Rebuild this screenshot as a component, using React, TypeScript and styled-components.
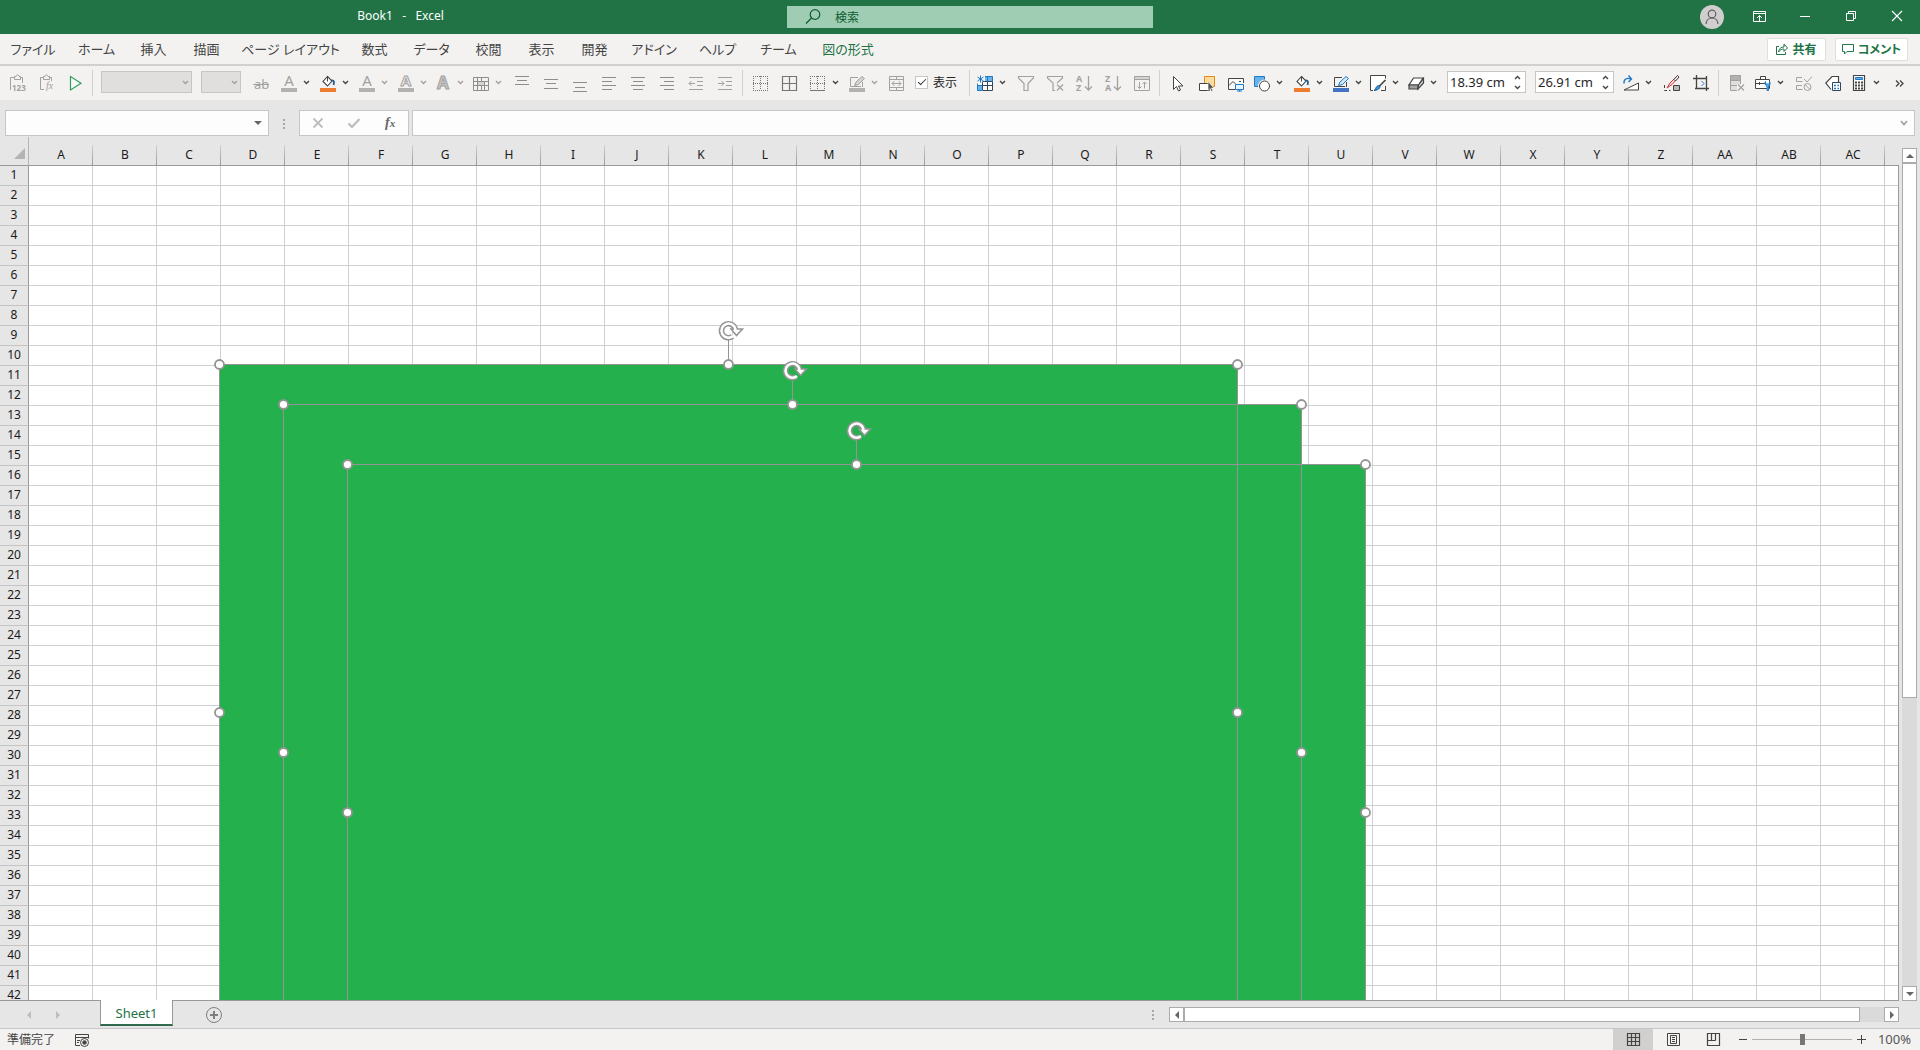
import React, { ReactNode } from "react";
import styled, { createGlobalStyle, css } from "styled-components";

const GlobalStyle = createGlobalStyle`
  *, *::before, *::after { box-sizing: border-box; }
  html, body { margin: 0; padding: 0; height: 100%; }
  body, button, input, select {
    font-family: "Noto Sans", "Noto Sans CJK JP", sans-serif;
    font-size: 12px;
    color: #262626;
  }
  button {
    display: flex;
    align-items: center;
    justify-content: center;
    margin: 0;
    padding: 0;
    border: 0;
    background: none;
    flex: none;
  }
  svg { display: block; flex: none; overflow: visible; }
`;

const GRAY = "#a3a19f";
const DARK = "#444444";
const BLUE = "#1e78c8";
const GREEN = "#217346";

/* ---------- window frame ---------- */

const Window = styled.div`
  display: flex;
  flex-direction: column;
  height: 100vh;
  overflow: hidden;
  background: #e6e6e6;
`;

const TitleBar = styled.header`
  display: grid;
  grid-template-columns: minmax(0, 1fr) 366px minmax(0, 1fr);
  align-items: center;
  flex: none;
  height: 34px;
  padding-left: 20px;
  background: ${GREEN};
`;

const Title = styled.h1`
  margin: 0;
  padding: 0 6px 2px 0;
  font-size: 12px;
  font-weight: 400;
  line-height: 30px;
  color: #ffffff;
  text-align: center;
  white-space: pre;
`;

const Search = styled.label`
  display: flex;
  align-items: center;
  gap: 14px;
  height: 22px;
  padding-left: 18px;
  background: #9fcdb3;
`;

const SearchInput = styled.input`
  flex: 1;
  min-width: 0;
  padding: 0;
  border: 0;
  outline: 0;
  background: transparent;
  color: #0e5c2f;
  &::placeholder { color: #0e5c2f; opacity: 1; }
`;

const WindowControls = styled.div`
  display: flex;
  align-items: center;
  justify-content: flex-end;
`;

const Avatar = styled.button`
  width: 24px;
  height: 24px;
  margin-right: 12px;
  border-radius: 50%;
  background: #d0cece;
`;

const WindowButton = styled.button`
  width: 46px;
  height: 32px;
  padding-bottom: 2px;
  color: #ffffff;
`;

/* ---------- ribbon tabs ---------- */

const TabRow = styled.div`
  display: flex;
  align-items: center;
  justify-content: space-between;
  flex: none;
  height: 30px;
  padding-right: 12px;
  background: #f3f2f1;
`;

const Tabs = styled.nav`
  display: flex;
`;

const RibbonTab = styled.button<{ $width: number; $active?: boolean }>`
  width: ${(p) => p.$width}px;
  height: 30px;
  padding-bottom: 2px;
  font-size: 13px;
  font-feature-settings: "palt";
  white-space: nowrap;
  color: ${(p) => (p.$active ? GREEN : "#444444")};
`;

const RibbonActions = styled.div`
  display: flex;
  gap: 9px;
`;

const ActionButton = styled.button<{ $width: number }>`
  width: ${(p) => p.$width}px;
  height: 23px;
  gap: 4px;
  border: 1px solid #e1dfdd;
  border-radius: 2px;
  background: #ffffff;
  color: ${GREEN};
  font-weight: 700;
  font-feature-settings: "palt";
  white-space: nowrap;
`;

/* ---------- toolbar ---------- */

const Toolbar = styled.div`
  display: flex;
  align-items: center;
  flex: none;
  height: 36px;
  padding-left: 3px;
  border-top: 2px solid #d2d0ce;
  background: #f3f2f1;
  overflow: hidden;
`;

const ToolButton = styled.button`
  width: 29px;
  height: 28px;
`;

const SplitButton = styled.button<{ $narrow?: boolean }>`
  justify-content: flex-start;
  gap: 5px;
  width: ${(p) => (p.$narrow ? 38 : 39)}px;
  height: 28px;
  padding-left: ${(p) => (p.$narrow ? 4 : 6)}px;
`;

const Raised = styled.span`
  display: flex;
  flex: none;
  margin-bottom: 2px;
`;

const Separator = styled.span<{ $before?: number; $after?: number }>`
  flex: none;
  width: 1px;
  height: 26px;
  margin: 0 ${(p) => p.$after ?? 3}px 0 ${(p) => p.$before ?? 3}px;
  background: #d2d0ce;
`;

const ComboGroup = styled.span`
  display: flex;
  flex: none;
  gap: 9px;
  margin: 0 5px 2px 0;
`;

const ComboWrap = styled.span<{ $width: number }>`
  display: grid;
  width: ${(p) => p.$width}px;
  height: 22px;
  > * { grid-area: 1 / 1; }
  > svg { align-self: center; justify-self: end; margin-right: 2px; }
`;

const Combo = styled.select`
  appearance: none;
  width: 100%;
  height: 100%;
  border: 1px solid #c8c6c4;
  border-radius: 0;
  background: #e1dfdd;
  opacity: 1;
`;

const ShowLabel = styled.label`
  display: flex;
  align-items: center;
  gap: 5px;
  flex: none;
  width: 54px;
  margin: 0 0 2px 4px;
  white-space: nowrap;
`;

const CheckBox = styled.input`
  appearance: none;
  flex: none;
  width: 13px;
  height: 13px;
  margin: 0;
  border: 1px solid #c8c6c4;
  background: #ffffff;
  &:checked::before {
    content: "";
    display: block;
    width: 8px;
    height: 4px;
    margin: 2px 0 0 2px;
    border: solid #333333;
    border-width: 0 0 1px 1px;
    transform: rotate(-45deg);
  }
`;

const SpinGroup = styled.span`
  display: flex;
  flex: none;
  gap: 9px;
  margin: 0 5px 2px 5px;
`;

const SpinBox = styled.span`
  display: flex;
  width: 79px;
  height: 22px;
  border: 1px solid #c8c6c4;
  background: #ffffff;
`;

const SpinInput = styled.input`
  flex: 1;
  min-width: 0;
  padding: 0 0 0 2px;
  border: 0;
  outline: 0;
  background: transparent;
  font-size: 13px;
`;

const SpinButtons = styled.span`
  display: flex;
  flex-direction: column;
  width: 16px;
`;

const SpinButton = styled.button`
  width: 16px;
  height: 10px;
`;

/* ---------- formula bar ---------- */

const FormulaRow = styled.div`
  display: flex;
  flex: none;
  height: 37px;
  padding: 10px 5px 0 5px;
`;

const boxed = css`
  display: flex;
  align-items: center;
  height: 26px;
  border: 1px solid #c6c6c6;
  background: #fdfdfd;
`;

const NameBox = styled.div`
  ${boxed}
  width: 264px;
`;

const BareInput = styled.input`
  flex: 1;
  min-width: 0;
  height: 100%;
  border: 0;
  outline: 0;
  background: transparent;
`;

const DropButton = styled.button`
  width: 20px;
  height: 24px;
`;

const DotGrip = styled.span<{ $width: number }>`
  display: flex;
  align-items: center;
  justify-content: center;
  flex: none;
  width: ${(p) => p.$width}px;
`;

const FormulaActions = styled.div`
  ${boxed}
  width: 110px;
  margin-right: 3px;
`;

const FormulaAction = styled.button`
  width: 36px;
  height: 24px;
`;

const FormulaBox = styled.div`
  ${boxed}
  flex: 1;
  min-width: 0;
`;

/* ---------- sheet ---------- */

const Workspace = styled.main`
  display: flex;
  flex: 1;
  min-height: 0;
`;

const SheetView = styled.section`
  position: relative;
  flex: 1;
  min-width: 0;
  overflow: hidden;
  border-bottom: 1px solid #999999;
`;

const Cells = styled.table`
  table-layout: fixed;
  width: max-content;
  border-collapse: separate;
  border-spacing: 0;
`;

const HeadCol = styled.col`
  width: 29px;
`;

const CellCol = styled.col`
  width: 64px;
`;

const Corner = styled.td`
  height: 29px;
  padding: 5px 3px 0 0;
  border-right: 1px solid #b4b4b4;
  border-bottom: 1px solid #999999;
  background: #e6e6e6;
  > svg { margin-left: auto; }
`;

const ColumnHead = styled.th`
  height: 29px;
  padding: 8px 0 0;
  border-bottom: 1px solid #999999;
  background: linear-gradient(#d0d0d0, #999999) right bottom / 1px 20px no-repeat #e6e6e6;
  font-weight: 400;
  line-height: 20px;
  color: #1a1a1a;
`;

const RowHead = styled.th`
  height: 20px;
  padding: 0;
  border-right: 1px solid #999999;
  border-bottom: 1px solid #c4c4c4;
  background: #e6e6e6;
  font-weight: 400;
  line-height: 17px;
  vertical-align: top;
  color: #1a1a1a;
`;

const Cell = styled.td`
  height: 20px;
  padding: 0;
  border-right: 1px solid #d0d0d0;
  border-bottom: 1px solid #d0d0d0;
  background: #ffffff;
`;

const SheetEdge = styled.div`
  flex: none;
  width: 1px;
  margin-top: 28px;
  background: #999999;
`;

/* Pictures float freely over the cells. */
const Picture = styled.div<{ $x: number; $y: number }>`
  position: absolute;
  left: ${(p) => p.$x}px;
  top: ${(p) => p.$y}px;
  width: 1019px;
  height: 697px;
  background: #24b14d;
`;

const Selection = styled.svg<{ $x: number; $y: number }>`
  position: absolute;
  left: ${(p) => p.$x}px;
  top: ${(p) => p.$y}px;
`;

const VerticalScroll = styled.div`
  display: flex;
  flex-direction: column;
  flex: none;
  width: 15px;
  margin: 11px 3px 0;
  background: #dadada;
`;

const ScrollButton = styled.button`
  width: 15px;
  height: 15px;
  border: 1px solid #ababab;
  background: #ffffff;
`;

const VerticalTrack = styled.div`
  flex: 1;
  min-height: 0;
`;

const VerticalThumb = styled.div`
  height: 65%;
  border: 1px solid #ababab;
  background: #ffffff;
`;

/* ---------- sheet tabs ---------- */

const SheetBar = styled.div`
  display: flex;
  align-items: center;
  justify-content: space-between;
  flex: none;
  height: 28px;
  padding-right: 21px;
  border-bottom: 1px solid #c6c6c6;
`;

const SheetTabs = styled.div`
  display: flex;
  align-items: center;
  height: 100%;
  padding-left: 14px;
`;

const SheetNav = styled.button`
  width: 29px;
  height: 24px;
`;

const SheetTab = styled.button`
  position: relative;
  align-self: flex-start;
  width: 73px;
  height: 26px;
  margin: -1px 29px 0 28px;
  padding-top: 2px;
  border: solid #999999;
  border-width: 0 1px;
  border-bottom: 2px solid #31694f;
  background: #ffffff;
  color: ${GREEN};
  font-size: 13px;
  line-height: 18px;
`;

const AddSheet = styled.button`
  width: 24px;
  height: 24px;
`;

const ScrollGroup = styled.div`
  display: flex;
  flex: none;
`;

const HorizontalScroll = styled.div`
  display: flex;
  width: 730px;
  height: 15px;
  background: #dadada;
`;

const HorizontalTrack = styled.div`
  flex: 1;
  min-width: 0;
  padding-right: 24px;
`;

const HorizontalThumb = styled.div`
  height: 15px;
  border: 1px solid #ababab;
  background: #ffffff;
`;

/* ---------- status bar ---------- */

const StatusBar = styled.footer`
  display: flex;
  align-items: center;
  justify-content: space-between;
  flex: none;
  height: 21px;
  padding: 0 9px 0 7px;
  background: #f3f2f1;
  color: #444444;
`;

const StatusGroup = styled.div`
  display: flex;
  align-items: center;
  height: 100%;
`;

const StatusText = styled.span`
  width: 60px;
  line-height: 20px;
  white-space: nowrap;
`;

const MacroButton = styled.button`
  width: 30px;
  height: 21px;
`;

const ViewButton = styled.button<{ $active?: boolean }>`
  width: 40px;
  height: 21px;
  background: ${(p) => (p.$active ? "#d2d0ce" : "transparent")};
`;

const ZoomButton = styled.button`
  width: 19px;
  height: 21px;
`;

const ZoomSlider = styled.input`
  appearance: none;
  width: 100px;
  height: 21px;
  margin: 0;
  background: transparent;
  &::-webkit-slider-runnable-track {
    height: 1px;
    background: #b0b0b0;
  }
  &::-webkit-slider-thumb {
    appearance: none;
    width: 5px;
    height: 11px;
    margin-top: -5px;
    border-radius: 0;
    background: #777777;
  }
`;

const ZoomValue = styled.button`
  width: 40px;
  height: 21px;
  padding-bottom: 2px;
  justify-content: flex-end;
  font-size: 13px;
  color: #555555;
`;

/* ---------- icons ---------- */

const Icon = ({ children, color = DARK, size = 16 }: { children: ReactNode; color?: string; size?: number }) => (
  <svg width={size} height={size} viewBox={`0 0 ${size} ${size}`} fill="none" stroke={color} aria-hidden="true">
    {children}
  </svg>
);

const Chevron = ({ color = DARK, up = false }: { color?: string; up?: boolean }) => (
  <svg width="9" height="5" viewBox="0 0 9 5" fill="none" stroke={color} strokeWidth="1.4" aria-hidden="true">
    <path d={up ? "M2 4 4.500 1.500 7 4" : "M2 1 4.500 3.500 7 1"} />
  </svg>
);

const Triangle = ({ d, color = "#666666" }: { d: string; color?: string }) => (
  <svg width="8" height="8" viewBox="0 0 8 8" fill={color} aria-hidden="true">
    <path d={d} />
  </svg>
);

const PasteValues = () => (
  <Icon color={GRAY}>
    <path d="M.5 15V2.500h4M10.500 2.500h2V8M4.500 4.500v-3H6a1.500 1.500 0 0 1 3 0h1.500v3z" />
    <text x="2" y="16" fontSize="8" fontWeight="700" fill={GRAY} stroke="none">123</text>
  </Icon>
);
const PasteFormula = () => (
  <Icon color={GRAY}>
    <path d="M5 14.500H1.500v-12h3M10.500 2.500h2V6M4.500 4.500v-3H6a1.500 1.500 0 0 1 3 0h1.500v3z" />
    <text x="7" y="14" fontSize="10" fontStyle="italic" fontFamily="Liberation Serif, serif" fill={GRAY} stroke="none">fx</text>
  </Icon>
);
const Play = () => (
  <Icon color="#2f9e5b">
    <path d="M2.500 1.500V15L13 8.200z" strokeWidth="1.2" fill="#fafafa" />
  </Icon>
);
const Strike = () => (
  <Icon color={GRAY}>
    <text x="1" y="14" fontSize="13" fill={GRAY} stroke="none">ab</text>
    <path d="M0 9.500h16" />
  </Icon>
);
const Letter = ({ outline, bar = true }: { outline?: boolean; bar?: boolean }) => (
  <Icon color={GRAY}>
    {outline ? (
      <text x="8" y={bar ? 11 : 14} textAnchor="middle" fontSize={bar ? 15 : 17} fontWeight="700" fill={bar ? "#f3f2f1" : "#c8c6c4"} stroke={GRAY}>A</text>
    ) : (
      <text x="8" y="11" textAnchor="middle" fontSize="15" fill={GRAY} stroke="none">A</text>
    )}
    {bar && <rect y="13" width="16" height="4" fill="#b3b1af" stroke="none" />}
  </Icon>
);
const Bucket = () => (
  <Icon>
    <path d="M7.500 1.500 12 6 7.500 11 3 6.500z" fill="#ffffff" strokeWidth="1.1" />
    <path d="M11.500 5.500c2.500-.5 3 1.500 2 4.500" stroke="#1c5f94" strokeWidth="1.800" />
    <path d="M7.500 6.500V1" />
    <rect y="13" width="16" height="4" fill="#ed7d31" stroke="none" />
  </Icon>
);
const MergedGrid = () => (
  <Icon color="#8f8d8b">
    <path d="M5 6.500h6v4H5z" fill="#d6d4d2" stroke="none" />
    <path d="M.5 2.500h15v13H.5zM.5 6.500h15M.5 10.500h15M4.500 2.500v13M11.500 6.500v9M8.500 2.500v4M8.500 10.500v5" />
  </Icon>
);
const Lines = ({ rows }: { rows: [number, number, number][] }) => (
  <Icon color="#8f8d8b">
    {rows.map(([y, x1, x2]) => (
      <path key={y} d={`M${x1} ${y}.5H${x2}`} />
    ))}
  </Icon>
);
const Indent = ({ right }: { right?: boolean }) => (
  <Icon color={GRAY}>
    <path d="M1 2.500h14M9 6.500h6M9 10.500h6M1 14.500h14" />
    <path d={right ? "M1 8.500h6M4.500 6 7 8.500 4.500 11" : "M7 8.500H1M3.500 6 1 8.500 3.500 11"} />
  </Icon>
);
const GridIcon = ({ mode }: { mode: "none" | "all" | "bottom" }) => (
  <Icon color="#777573">
    {mode === "all" ? (
      <path d="M.5 1.500h14v14H.5zM.5 8.500h14M7.500 1.500v14" strokeWidth="1.200" />
    ) : (
      <>
        <path strokeDasharray="1 1" d="M0 1.500h15M.5 1v14M14.500 1v14M0 8.500h15M7.500 1v14" />
        <path strokeDasharray={mode === "none" ? "1 1" : undefined} d="M0 15.500h15" />
      </>
    )}
  </Icon>
);
const PenBar = ({ on }: { on?: boolean }) => (
  <Icon color={on ? DARK : GRAY}>
    <path d="M9 2.500H1.500v9H12M13.500 7v5" />
    <path d="M5.500 10.500 7 7 13 1.500 15.500 3.500 9.500 9.500z" stroke={on ? BLUE : GRAY} fill={on ? "#d4e8f8" : "#d6d4d2"} />
    <rect y="13" width="16" height="4" fill={on ? "#4472c4" : "#b3b1af"} stroke="none" />
  </Icon>
);
const MergeCells = () => (
  <Icon color={GRAY}>
    <path d="M.5 1.500h14v14H.5zM.5 4.500h14M.5 12.500h14M7.500 1.500v3M7.500 12.500v3M3 8.500h9M5.500 6 3 8.500 5.500 11M9.500 6 12 8.500 9.500 11" />
  </Icon>
);
const TableStar = () => (
  <Icon>
    <path d="M5 5h11v11H0V8h5z" fill="#ffffff" stroke="none" />
    <path d="M8 1.500h8v5H8zM0 11h5v5H0z" fill="#69b3ec" stroke="none" />
    <path d="M15.500 6.500v9H6M6 6.500h9.500M6 10.500h9.500M5.500 6.500v9M10.500 6.500v9" stroke="#33475a" />
    <path d="M8 1.500h7.500v5M10.500 1.500v5M.5 8.500v7H5.500M.5 10.500h5" stroke={BLUE} />
    <path d="M3.500.5v7M.5 2l6 4M6.500 2l-6 4" stroke={BLUE} />
  </Icon>
);
const Funnel = ({ cleared }: { cleared?: boolean }) => (
  <Icon color={GRAY}>
    {cleared ? (
      <>
        <path d="M8 15.500H6V8L.5 3V1.500h15V3L10 8" strokeWidth="1.200" />
        <path d="M10 9.500l6 6M16 9.500l-6 6" strokeWidth="1.300" />
      </>
    ) : (
      <path d="M.5 1.500h15V3L10 8.500v7H6v-7L.5 3z" strokeWidth="1.200" />
    )}
  </Icon>
);
const Sort = ({ top, bottom }: { top: string; bottom: string }) => (
  <Icon color={GRAY}>
    <text x="0" y="7" fontSize="9" fontWeight="700" fill={GRAY} stroke="none">
      {top}
      <tspan x="0" dy="9">{bottom}</tspan>
    </text>
    <path d="M12.500 1v14M9 11.500l3.500 3.500L16 11.500" strokeWidth="1.300" />
  </Icon>
);
const SortPanel = () => (
  <Icon color={GRAY}>
    <path d="M.5 1.500h15v14H.5z" />
    <path d="M.5 1.500h15v3H.5z" fill="#d6d4d2" />
    <path d="M5.500 7v6.500M3.500 11.500l2 2 2-2M10.500 13.500V7M8.500 9l2-2 2 2" />
  </Icon>
);
const Pointer = () => (
  <Icon>
    <path d="M3.500 1.500v13l3-3 2 4.500 2-1-2-4H13z" fill="#ffffff" />
  </Icon>
);
const SelectObjects = () => (
  <Icon>
    <path d="M5.500 1.500h10v10h-10z" fill="#fbdc9b" stroke="#e08a1e" />
    <path d="M.5 8.500h10v7H.5z" fill="#ffffff" />
    <path d="M9 6.500v9l2-2 1.500 3 1.500-.7L12.500 13H15z" fill="#555555" stroke="#ffffff" strokeWidth=".6" />
  </Icon>
);
const PictureIcon = () => (
  <Icon>
    <path d="M7 14.500H.5v-11h15V8" fill="#fbfbfb" />
    <path d="M1 10.500l4-4 3 3M11 6.500h2" />
    <path d="M7.500 9.500h8v5h-8zM11.500 14.500v2M9 16h5" stroke={BLUE} fill="#eaf5fd" />
  </Icon>
);
const ShapesIcon = () => (
  <Icon>
    <path d="M.5 1.500h10v10H.5z" fill="#69b3ec" stroke={BLUE} />
    <circle cx="10.500" cy="11" r="5.500" fill="#ffffff" stroke="#f3f2f1" strokeWidth="2" />
    <circle cx="10.500" cy="11" r="5" fill="#ffffff" />
  </Icon>
);
const BrushSquare = () => (
  <Icon>
    <path d="M3 15.500H.5V.5h15v3M15.500 11v4.500H11" fill="#ffffff" />
    <path d="M15.500 5 9 11.500" strokeWidth="1.600" />
    <path d="M9.500 10.500c1 1 .5 4.500-5.500 5 2-1 1.500-5 5.500-5z" fill="#3b8fd6" stroke="#1c5f94" />
  </Icon>
);
const Eraser = () => (
  <Icon>
    <path d="M5.500 3h9.500L10.500 10H1z" fill="#ffffff" strokeWidth="1.200" />
    <path d="M1 10v4h9v-4z" fill="#a19f9d" strokeWidth="1.200" />
    <path d="M10.500 10 15.500 3.500V8L10 14z" fill="#d6d4d2" strokeWidth="1.200" />
  </Icon>
);
const RotateShape = () => (
  <Icon>
    <path d="M1 8.500C.5 4 4 2.500 8 4M5.500 .5l3 3.500-3 3" stroke={BLUE} strokeWidth="1.400" />
    <path d="M15.500 8v7H1z" fill="#ffffff" />
  </Icon>
);
const RedBrush = () => (
  <Icon>
    <path d="M9.500 10.500h6v5h-6z" fill="#b9b7b5" />
    <path d="M.5 10v5.500h6" strokeDasharray="3 2" />
    <path d="M3 13 6 8 13.500.5 15 2 8 9.500z" stroke="#d13438" fill="#fbd9da" />
    <path d="M10 4.500 13.500.5 15 2 11.500 6z" fill="#ffffff" />
  </Icon>
);
const Crop = () => (
  <Icon>
    <path d="M3.500 0v13.500M0 3.500h13.500M13.500 1v15M2 13.500h14" strokeWidth="1.300" />
    <path d="M8.500 6 11 8.500 8.500 11" stroke={BLUE} />
  </Icon>
);
const DeleteRows = () => (
  <Icon color={GRAY}>
    <path d="M1.500.5h10v15h-10zM1.500 5.500h10M1.500 10.500h10" fill="#e1dfdd" />
    <path d="M1.500.5h10v5h-10z" fill="#b3b1af" />
    <rect x="8" y="9" width="8" height="7" fill="#f3f2f1" stroke="none" />
    <path d="M9 9.500l6 6M15 9.500l-6 6" strokeWidth="1.200" />
  </Icon>
);
const Briefcase = () => (
  <Icon>
    <path d="M.5 4.500h14v9H.5zM5.500 4.500V1.500h5v3M.5 8.500h10M4.500 7v3" fill="#ffffff" />
    <path d="M12 15.500V11a3 3 0 0 1-1.500-4.500v2.500h4V6.500A3 3 0 0 1 13.500 11v4.500z" stroke={BLUE} fill="#69b3ec" />
  </Icon>
);
const RuleCheck = () => (
  <Icon color={GRAY}>
    <path d="M6 2.500H.5v4h6M6 10.500H.5v4h6M8 4l3 3 5-5.500" />
    <circle cx="11.500" cy="12" r="3.500" />
    <path d="M9 9.500l5 5" />
  </Icon>
);
const TagList = () => (
  <Icon>
    <path d="M6 14.500.8 8 7 1.500h6.500V7" strokeWidth="1.200" fill="#ffffff" />
    <path d="M7.500 7.500h8v8h-8z" fill="#ffffff" stroke="#33475a" />
    <path d="M9 10.500h2M9 13.500h2M12.500 10.500H14M12.500 13.500H14" stroke={BLUE} strokeWidth="1.600" />
  </Icon>
);
const Calculator = () => (
  <Icon>
    <path d="M2.500.5h11v15h-11z" fill="#ffffff" strokeWidth="1.200" />
    <path d="M4.500 2.500h7v2h-7z" stroke={BLUE} fill="#69b3ec" />
    <path d="M4 7.500h8M4 10.500h8M4 13.500h8" strokeDasharray="2 1" strokeWidth="2" />
  </Icon>
);

const Dots = ({ color = "#a6a6a6" }: { color?: string }) => (
  <svg width="2" height="10" viewBox="0 0 2 10" fill={color} aria-hidden="true">
    <path d="M0 0h2v2H0zM0 4h2v2H0zM0 8h2v2H0z" />
  </svg>
);

/* ---------- data ---------- */

const ribbonTabs: { label: string; width: number; active?: boolean }[] = [
  { label: "ファイル", width: 66 },
  { label: "ホーム", width: 61 },
  { label: "挿入", width: 53 },
  { label: "描画", width: 53 },
  { label: "ページ レイアウト", width: 115 },
  { label: "数式", width: 53 },
  { label: "データ", width: 61 },
  { label: "校閲", width: 53 },
  { label: "表示", width: 53 },
  { label: "開発", width: 53 },
  { label: "アドイン", width: 66 },
  { label: "ヘルプ", width: 61 },
  { label: "チーム", width: 61 },
  { label: "図の形式", width: 78, active: true },
];

/* The last column is a blank sliver beside the scroll bar. */
const columns = Array.from({ length: 29 }, (_, i) =>
  i < 26 ? String.fromCharCode(65 + i) : "A" + String.fromCharCode(39 + i)
).concat("");
const rows = Array.from({ length: 42 }, (_, i) => i + 1);

const pictures = [
  { x: 219, y: 227 },
  { x: 283, y: 267 },
  { x: 347, y: 327 },
];

/* ---------- composed parts ---------- */

const Tool = ({ label, children }: { label: string; children: ReactNode }) => (
  <ToolButton type="button" aria-label={label}>{children}</ToolButton>
);

const Split = ({ label, narrow, off, children }: { label: string; narrow?: boolean; off?: boolean; children: ReactNode }) => (
  <SplitButton type="button" aria-label={label} aria-haspopup="menu" $narrow={narrow}>
    {children}
    <Raised><Chevron color={off ? GRAY : DARK} /></Raised>
  </SplitButton>
);

const DisabledCombo = ({ label, width }: { label: string; width: number }) => (
  <ComboWrap $width={width}>
    <Combo aria-label={label} disabled />
    <Chevron color={GRAY} />
  </ComboWrap>
);

const Spinner = ({ label, value }: { label: string; value: string }) => (
  <SpinBox>
    <SpinInput aria-label={label} defaultValue={value} />
    <SpinButtons>
      <SpinButton type="button" aria-label={`${label}を増やす`}><Chevron up /></SpinButton>
      <SpinButton type="button" aria-label={`${label}を減らす`}><Chevron /></SpinButton>
    </SpinButtons>
  </SpinBox>
);

const SelectionFrame = ({ x, y }: { x: number; y: number }) => {
  const handles = [
    [0, 0], [509, 0], [1018, 0],
    [0, 348], [1018, 348],
    [0, 696], [509, 696], [1018, 696],
  ];
  return (
    <Selection $x={x} $y={y} width="1019" height="697" viewBox="-.5 -.5 1019 697" fill="none" stroke="#949494" aria-hidden="true">
      <path d="M0 0H1018V696H0zM509 0V-25" />
      <g transform="translate(509 -34)">
        <path d="M7 0A7 7 0 1 0 4 6" strokeWidth="5.500" />
        <path d="M2.500-1.500H14L8 5z" fill="#ffffff" strokeWidth="1.500" />
        <path d="M7 0A7 7 0 1 0 4.500 5.500" stroke="#ffffff" strokeWidth="2.500" />
      </g>
      {handles.map(([cx, cy]) => (
        <circle key={`${cx}-${cy}`} cx={cx} cy={cy} r="4.500" fill="#ffffff" strokeWidth="1.800" />
      ))}
    </Selection>
  );
};

const MainToolbar = () => (
  <Toolbar role="toolbar" aria-label="クイック アクセス">
    <Tool label="値の貼り付け"><PasteValues /></Tool>
    <Tool label="数式の貼り付け"><PasteFormula /></Tool>
    <Tool label="実行"><Play /></Tool>
    <Separator $before={2} $after={8} />
    <ComboGroup>
      <DisabledCombo label="フォント" width={91} />
      <DisabledCombo label="フォント サイズ" width={40} />
    </ComboGroup>
    <Tool label="取り消し線"><Strike /></Tool>
    <Split label="フォントの色"><Letter /></Split>
    <Split label="塗りつぶしの色"><Bucket /></Split>
    <Split label="文字の塗りつぶし" off><Letter /></Split>
    <Split label="文字の輪郭" off><Letter outline /></Split>
    <Split label="文字の効果" narrow off><Letter outline bar={false} /></Split>
    <Split label="セルの結合" narrow off><MergedGrid /></Split>
    <Tool label="上揃え"><Lines rows={[[1, 1, 15], [5, 3, 13], [9, 1, 15]]} /></Tool>
    <Tool label="上下中央揃え"><Lines rows={[[4, 1, 15], [8, 3, 13], [13, 1, 15]]} /></Tool>
    <Tool label="下揃え"><Lines rows={[[7, 1, 15], [12, 3, 13], [16, 1, 15]]} /></Tool>
    <Tool label="左揃え"><Lines rows={[[2, 1, 15], [6, 1, 11], [10, 1, 15], [14, 1, 11]]} /></Tool>
    <Tool label="中央揃え"><Lines rows={[[2, 1, 15], [6, 3, 13], [10, 1, 15], [14, 3, 13]]} /></Tool>
    <Tool label="右揃え"><Lines rows={[[2, 1, 15], [6, 5, 15], [10, 1, 15], [14, 5, 15]]} /></Tool>
    <Tool label="インデントを減らす"><Indent /></Tool>
    <Tool label="インデントを増やす"><Indent right /></Tool>
    <Separator />
    <Tool label="枠なし"><GridIcon mode="none" /></Tool>
    <Tool label="格子"><GridIcon mode="all" /></Tool>
    <Split label="下罫線"><GridIcon mode="bottom" /></Split>
    <Split label="線の色" off><PenBar /></Split>
    <Tool label="セルを結合して中央揃え"><MergeCells /></Tool>
    <ShowLabel>
      <CheckBox type="checkbox" defaultChecked />
      表示
    </ShowLabel>
    <Separator $before={0} />
    <Split label="テーブル" narrow><TableStar /></Split>
    <Tool label="フィルター"><Funnel /></Tool>
    <Tool label="クリア"><Funnel cleared /></Tool>
    <Tool label="昇順"><Sort top="A" bottom="Z" /></Tool>
    <Tool label="降順"><Sort top="Z" bottom="A" /></Tool>
    <Tool label="並べ替え"><SortPanel /></Tool>
    <Separator />
    <Tool label="選択"><Pointer /></Tool>
    <Tool label="オブジェクトの選択"><SelectObjects /></Tool>
    <Tool label="画像"><PictureIcon /></Tool>
    <Split label="図形" narrow><ShapesIcon /></Split>
    <Split label="図形の塗りつぶし"><Bucket /></Split>
    <Split label="図形の枠線"><PenBar on /></Split>
    <Split label="図形の効果" narrow><BrushSquare /></Split>
    <Split label="消しゴム" narrow><Eraser /></Split>
    <SpinGroup>
      <Spinner label="高さ" value="18.39 cm" />
      <Spinner label="幅" value="26.91 cm" />
    </SpinGroup>
    <Split label="回転" narrow><RotateShape /></Split>
    <Tool label="背景の削除"><RedBrush /></Tool>
    <Tool label="トリミング"><Crop /></Tool>
    <Separator />
    <Tool label="行の削除"><DeleteRows /></Tool>
    <Split label="ツール" narrow><Briefcase /></Split>
    <Tool label="入力規則"><RuleCheck /></Tool>
    <Tool label="名前"><TagList /></Tool>
    <Split label="計算方法" narrow><Calculator /></Split>
    <Tool label="その他">
      <Icon size={9}><path d="M1 1.500 4 4.500 1 7.500M5 1.500 8 4.500 5 7.500" strokeWidth="1.300" /></Icon>
    </Tool>
  </Toolbar>
);

const App = () => (
  <Window>
    <GlobalStyle />
    <TitleBar>
      <Title>{"Book1   -   Excel"}</Title>
      <Search>
        <Icon color="#0e5c2f">
          <circle cx="10" cy="5.500" r="4.800" strokeWidth="1.200" />
          <path d="M6.500 9 1 14.500" strokeWidth="1.300" />
        </Icon>
        <SearchInput type="text" placeholder="検索" aria-label="検索" />
      </Search>
      <WindowControls>
        <Avatar type="button" aria-label="アカウント">
          <Icon color="#5f5d5d"><circle cx="8" cy="5" r="3.800" strokeWidth="1.200" /><path d="M2 15c.5-8 11.500-8 12 0" strokeWidth="1.200" /></Icon>
        </Avatar>
        <WindowButton type="button" aria-label="リボンの表示オプション">
          <Icon color="#ffffff" size={13}><path d="M.5 1.500h12v10H.5zM.5 3.500h12M6.500 11V5.500M4 8l2.500-2.500L9 8" /></Icon>
        </WindowButton>
        <WindowButton type="button" aria-label="最小化">
          <Icon color="#ffffff" size={10}><path d="M0 5.500h10" /></Icon>
        </WindowButton>
        <WindowButton type="button" aria-label="元に戻す">
          <Icon color="#ffffff" size={10}><path d="M.5 2.500h7v7h-7zM2.500 2V.5h7v7H8" /></Icon>
        </WindowButton>
        <WindowButton type="button" aria-label="閉じる">
          <Icon color="#ffffff" size={10}><path d="M0 0l10 10M10 0 0 10" strokeWidth="1.200" /></Icon>
        </WindowButton>
      </WindowControls>
    </TitleBar>

    <TabRow>
      <Tabs>
        {ribbonTabs.map((t) => (
          <RibbonTab key={t.label} type="button" $width={t.width} $active={t.active}>{t.label}</RibbonTab>
        ))}
      </Tabs>
      <RibbonActions>
        <ActionButton type="button" $width={59}>
          <Icon color={GREEN} size={12}><path d="M3 3.500H.5v8h9V9M2.500 9C3 5.500 5 4 8 4V1l3.500 4L8 8.500V6C5.500 6 4 7 2.500 9z" /></Icon>
          共有
        </ActionButton>
        <ActionButton type="button" $width={73}>
          <Icon color={GREEN} size={12}><path d="M.5 1.500h11v7H5L2.500 11V8.500h-2z" /></Icon>
          コメント
        </ActionButton>
      </RibbonActions>
    </TabRow>

    <MainToolbar />

    <FormulaRow>
      <NameBox>
        <BareInput aria-label="名前ボックス" />
        <DropButton type="button" aria-label="名前の一覧"><Triangle d="M0 2h8L4 6z" /></DropButton>
      </NameBox>
      <DotGrip $width={30}><Dots /></DotGrip>
      <FormulaActions>
        <FormulaAction type="button" aria-label="キャンセル">
          <Icon color="#bdbdbd" size={12}><path d="M1.500 1.500l9 9M10.500 1.500l-9 9" strokeWidth="1.800" /></Icon>
        </FormulaAction>
        <FormulaAction type="button" aria-label="入力">
          <Icon color="#bdbdbd" size={12}><path d="M.5 6.500 4 10 11.500 2" strokeWidth="2.200" /></Icon>
        </FormulaAction>
        <FormulaAction type="button" aria-label="関数の挿入">
          <Icon>
            <text x="3" y="12" fontSize="14" fontWeight="700" fontStyle="italic" fontFamily="Liberation Serif, serif" fill="#666666" stroke="none">
              f<tspan fontSize="11">x</tspan>
            </text>
          </Icon>
        </FormulaAction>
      </FormulaActions>
      <FormulaBox>
        <BareInput aria-label="数式バー" />
        <DropButton type="button" aria-label="数式バーの展開">
          <Icon color="#a6a6a6" size={8}><path d="M1 2l3 3.500L7 2" strokeWidth="1.800" /></Icon>
        </DropButton>
      </FormulaBox>
    </FormulaRow>

    <Workspace>
      <SheetView>
        <Cells>
          <colgroup>
            <HeadCol />
            {columns.map((c) => <CellCol key={c} />)}
          </colgroup>
          <thead>
            <tr>
              <Corner>
                <svg width="11" height="11" viewBox="0 0 11 11" fill="#b4b4b4" aria-hidden="true"><path d="M11 0v11H0z" /></svg>
              </Corner>
              {columns.map((c) => <ColumnHead key={c} scope="col">{c}</ColumnHead>)}
            </tr>
          </thead>
          <tbody>
            {rows.map((r) => (
              <tr key={r}>
                <RowHead scope="row">{r}</RowHead>
                {columns.map((c) => <Cell key={c} />)}
              </tr>
            ))}
          </tbody>
        </Cells>
        {pictures.map((p) => <Picture key={p.x} $x={p.x} $y={p.y} />)}
        {pictures.map((p) => <SelectionFrame key={p.x} x={p.x} y={p.y} />)}
      </SheetView>
      <SheetEdge />
      <VerticalScroll>
        <ScrollButton type="button" aria-label="上へスクロール"><Triangle d="M0 6h8L4 2z" /></ScrollButton>
        <VerticalTrack><VerticalThumb /></VerticalTrack>
        <ScrollButton type="button" aria-label="下へスクロール"><Triangle d="M0 2h8L4 6z" /></ScrollButton>
      </VerticalScroll>
    </Workspace>

    <SheetBar>
      <SheetTabs>
        <SheetNav type="button" aria-label="前のシート"><Triangle color="#bdbdbd" d="M6 0v8L2 4z" /></SheetNav>
        <SheetNav type="button" aria-label="次のシート"><Triangle color="#bdbdbd" d="M2 0v8l4-4z" /></SheetNav>
        <SheetTab type="button">Sheet1</SheetTab>
        <AddSheet type="button" aria-label="新しいシート">
          <Icon color="#7f7f7f"><circle cx="8" cy="8" r="7.500" /><path d="M8 4v8M4 8h8" strokeWidth="2" /></Icon>
        </AddSheet>
      </SheetTabs>
      <ScrollGroup>
        <DotGrip $width={32}><Dots /></DotGrip>
        <HorizontalScroll>
          <ScrollButton type="button" aria-label="左へスクロール"><Triangle d="M6 0v8L2 4z" /></ScrollButton>
          <HorizontalTrack><HorizontalThumb /></HorizontalTrack>
          <ScrollButton type="button" aria-label="右へスクロール"><Triangle d="M2 0v8l4-4z" /></ScrollButton>
        </HorizontalScroll>
      </ScrollGroup>
    </SheetBar>

    <StatusBar>
      <StatusGroup>
        <StatusText>準備完了</StatusText>
        <MacroButton type="button" aria-label="マクロの記録">
          <Icon>
            <path d="M6 13.500H1.500v-11h13v4M1.500 5.500h13M3 8.500h3M3 10.500h2" />
            <circle cx="10.500" cy="10.500" r="4" />
            <circle cx="10.500" cy="10.500" r="1.800" fill={DARK} />
          </Icon>
        </MacroButton>
      </StatusGroup>
      <StatusGroup>
        <ViewButton type="button" aria-label="標準" $active>
          <Icon size={13}><path d="M.5.500h12v12H.5zM4.500.5v12M8.500.5v12M.5 4.500h12M.5 8.500h12" strokeWidth="1.200" /></Icon>
        </ViewButton>
        <ViewButton type="button" aria-label="ページ レイアウト">
          <Icon size={13}><path d="M.5.500h12v12H.5zM3.500 2.500h6v8h-6zM5 4.500h3M5 6.500h3M5 8.500h3" /></Icon>
        </ViewButton>
        <ViewButton type="button" aria-label="改ページ プレビュー">
          <Icon size={13}><path d="M.5.500h12v12H.5zM4.500.5v7M8.500.5v7M.5 7.500h8" strokeWidth="1.200" /></Icon>
        </ViewButton>
        <ZoomButton type="button" aria-label="縮小"><Icon size={9}><path d="M1 4.500h8" /></Icon></ZoomButton>
        <ZoomSlider type="range" min="0" max="100" defaultValue="50" aria-label="ズーム" />
        <ZoomButton type="button" aria-label="拡大"><Icon size={9}><path d="M0 4.500h9M4.500 0v9" /></Icon></ZoomButton>
        <ZoomValue type="button">100%</ZoomValue>
      </StatusGroup>
    </StatusBar>
  </Window>
);

export default App;
